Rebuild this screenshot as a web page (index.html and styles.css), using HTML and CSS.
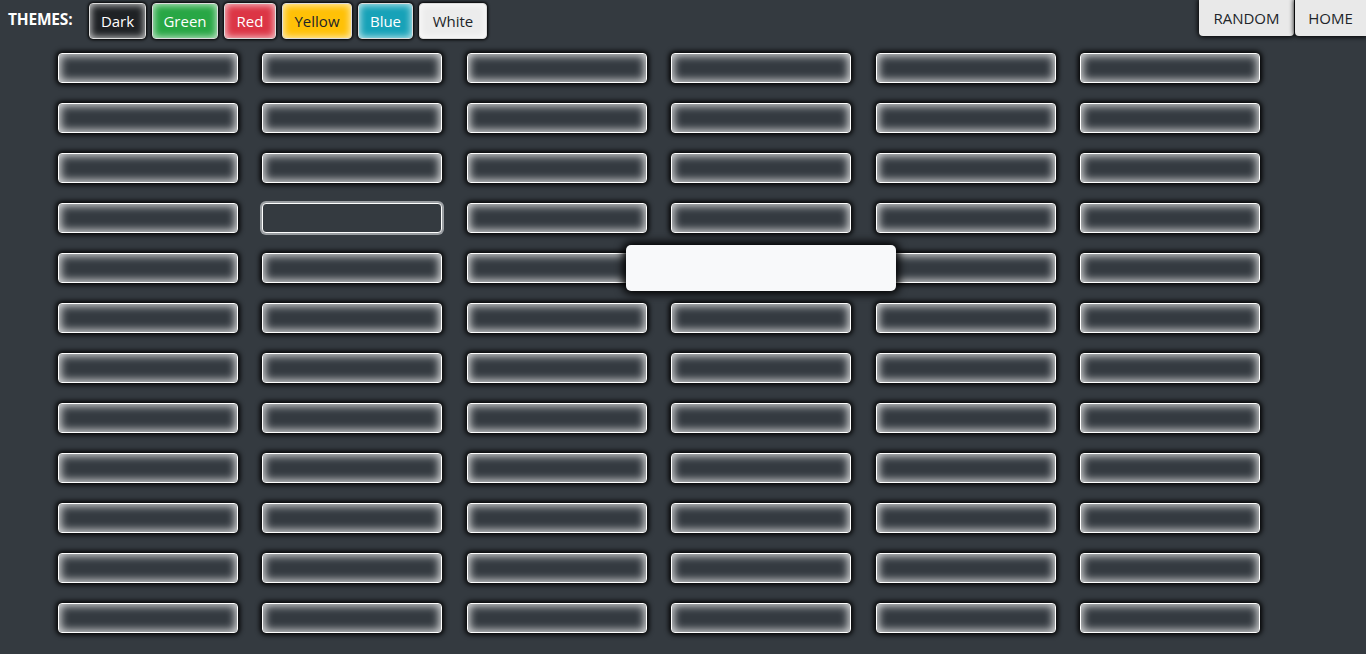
FILE: index.html
```html
<!DOCTYPE html>
<html>
<head>
<meta charset="utf-8">
<link rel="stylesheet" href="styles.css">
</head>
<body>
<header class="topbar">
  <span class="label">THEMES:</span>
  <div class="themes">
    <button class="tb dark">Dark</button>
    <button class="tb green">Green</button>
    <button class="tb red">Red</button>
    <button class="tb yellow">Yellow</button>
    <button class="tb blue">Blue</button>
    <button class="tb white">White</button>
  </div>
  <div class="nav">
    <button class="nb">RANDOM</button>
    <button class="nb">HOME</button>
  </div>
</header>
<main class="grid" id="grid"></main>
<div class="popup"></div>
<script>
  var g = document.getElementById('grid');
  for (var i = 0; i < 72; i++) {
    var t = document.createElement('div');
    t.className = 'tile' + (i === 19 ? ' focus' : '');
    g.appendChild(t);
  }
</script>
</body>
</html>
```
FILE: styles.css
```css
html, body {
  margin: 0;
  padding: 0;
  background: #343a40;
  height: 654px;
  overflow: hidden;
  font-family: "Open Sans", "Noto Sans", sans-serif;
}
.topbar {
  display: flex;
  align-items: flex-start;
  height: 41px;
  padding-left: 8px;
}
.label {
  color: #fff;
  font-weight: 700;
  font-size: 15.5px;
  line-height: 20px;
  margin-top: 9px;
  letter-spacing: -0.2px;
  width: 81px;
}
.themes {
  display: flex;
  gap: 6px;
  margin-top: 3px;
}
.tb {
  height: 36px;
  padding: 0;
  font-family: "Open Sans", "Noto Sans", sans-serif;
  font-size: 15px;
  border-radius: 4px;
  border: 1px solid #ddd;
  color: #fff;
  box-shadow: inset 0 0 7px 1px rgba(255,255,255,0.75), 0 0 3px 1px #000;
}
.dark { background: #1f2225; width: 57px; }
.green { background: #28a745; width: 66px; }
.red { background: #dc3545; width: 52px; }
.yellow { background: #ffc107; color: #212529; width: 70px; }
.blue { background: #17a2b8; width: 55px; }
.white { background: #ececec; color: #212529; width: 68px; }
.nav {
  margin-left: auto;
  display: flex;
  gap: 1px;
}
.nb {
  height: 36px;
  background: #e9e9e9;
  border: none;
  color: #212529;
  font-family: "Open Sans", "Noto Sans", sans-serif;
  font-size: 15px;
  box-shadow: 0 0 5px 1px #000;
  padding: 0;
}
.nb:first-child { width: 95px; border-radius: 0 0 4px 4px; }
.nb:last-child { width: 71px; border-radius: 0 0 0 4px; }
.grid {
  display: grid;
  grid-template-columns: repeat(6, 180px);
  column-gap: 24.4px;
  row-gap: 20px;
  padding: 12px 0 0 58px;
}
.tile {
  height: 30px;
  box-sizing: border-box;
  border: 1px solid #fff;
  border-radius: 4px;
  background: #343a40;
  box-shadow: inset 0 0 8px 2px rgba(255,255,255,0.8), 0 0 5px 2px #000;
}
.tile.focus {
  box-shadow: 0 0 0 2px #9a9ea2;
}
.popup {
  position: absolute;
  left: 626px;
  top: 245px;
  width: 270px;
  height: 46px;
  background: #f8f9fa;
  border-radius: 5px;
  box-shadow: 0 0 8px 3px #000;
}
```
